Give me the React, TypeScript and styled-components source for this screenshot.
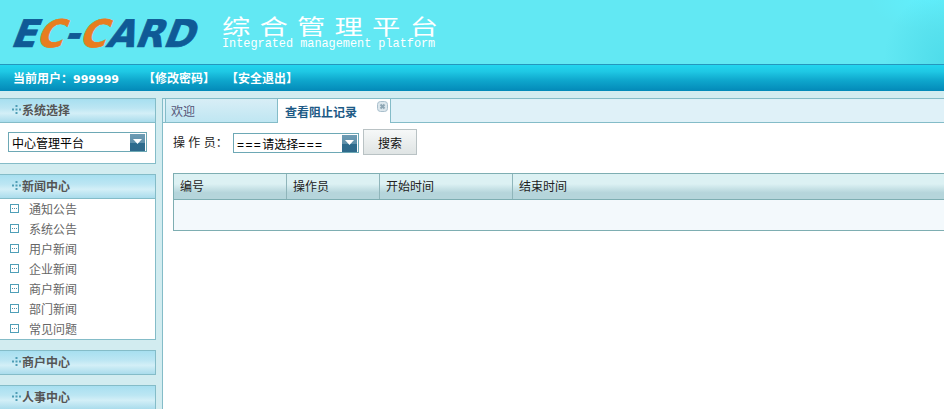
import React from 'react'
import styled, { createGlobalStyle } from 'styled-components'

const GlobalStyle = createGlobalStyle`
  html, body {
    margin: 0;
    padding: 0;
    height: 100%;
    overflow: hidden;
    background: #d2ecf0;
  }
  #root {
    height: 100%;
  }
`

const FONT = `"Liberation Sans", "Noto Sans CJK SC", sans-serif`

const Page = styled.div`
  width: 944px;
  height: 409px;
  overflow: hidden;
  display: flex;
  flex-direction: column;
  font-family: ${FONT};
  font-size: 12px;
  color: #333;
`

const Header = styled.div`
  height: 64px;
  flex: none;
  box-sizing: border-box;
  padding: 13px 0 0 13px;
  display: flex;
  align-items: flex-start;
  background:
    radial-gradient(ellipse 60px 70px at 944px 60px, #4fdcea 0%, rgba(79, 220, 234, 0) 100%),
    radial-gradient(ellipse 60px 30px at 930px 0, #62effc 0%, rgba(98, 239, 252, 0) 100%),
    #62e8f3;
`

const Logo = styled.div`
  width: 215px;
  flex: none;
  margin: 1px 0 0 -6px;
  font-family: "DejaVu Sans", sans-serif;
  font-weight: 700;
  font-size: 38px;
  line-height: 40px;
  white-space: nowrap;
  color: #0f5a96;
  -webkit-text-stroke: 0.7px currentColor;
  transform: skewX(-21deg) scaleX(0.97);
  transform-origin: left bottom;
`

const LogoAccent = styled.span`
  color: #e77d20;
`

const Brand = styled.div`
  color: #fff;
`

const BrandTitle = styled.div`
  font-family: "Noto Sans CJK SC", sans-serif;
  font-size: 21px;
  line-height: 24px;
  letter-spacing: 6.8px;
  white-space: nowrap;
  transform: scaleX(1.35);
  transform-origin: left center;
`

const BrandSub = styled.div`
  font-family: "Liberation Mono", monospace;
  font-size: 11.85px;
  line-height: 13px;
  margin-top: 1px;
  white-space: nowrap;
`

const UserBar = styled.div`
  height: 27px;
  flex: none;
  box-sizing: border-box;
  border-top: 1px solid #2596bd;
  padding: 0 0 2px 13px;
  display: flex;
  align-items: center;
  color: #fff;
  font-weight: 700;
  font-size: 12px;
  background: linear-gradient(#22d5ef 0%, #1fc8e4 25%, #0ea6cc 60%, #0389b8 100%);
`

const UserInfo = styled.span`
  width: 130px;
`

const UserId = styled.span`
  font-family: "DejaVu Sans", sans-serif;
  font-size: 11px;
`

const BarLink = styled.span`
  width: 83px;
`

const Body = styled.div`
  flex: 1;
  display: flex;
  padding-top: 7px;
  min-height: 0;
`

const Sidebar = styled.div`
  width: 156px;
  flex: none;
  display: flex;
  flex-direction: column;
  gap: 10px;
`

const Panel = styled.div`
  box-sizing: border-box;
  border: 1px solid #84bcc8;
  border-left: none;
  background: #fff;
`

const PanelHead = styled.div`
  height: 23px;
  box-sizing: border-box;
  padding: 0 0 2px 12px;
  display: flex;
  align-items: center;
  gap: 1px;
  font-weight: 700;
  color: #555;
  background: linear-gradient(#a7dff0 0%, #bce6f3 40%, #d3eff7 62%, #aadcec 100%);
`

const PanelBody = styled.div`
  border-top: 1px solid #84bcc8;
`

const SelectWrap = styled.div`
  padding: 9px 8px 11px;
`

const SelectBox = styled.div<{ $width: number }>`
  width: ${(p) => p.$width}px;
  height: 20px;
  box-sizing: border-box;
  border: 1px solid #6da8b5;
  background: #fff;
  display: flex;
  align-items: center;
  justify-content: space-between;
  padding: 0 1px 0 3px;
  color: #000;
  font-size: 12px;
`

const SelectText = styled.span`
  white-space: nowrap;
`

const Wide = styled.span`
  letter-spacing: 1.4px;
`

const SelectArrow = styled.span`
  width: 15px;
  height: 17px;
  flex: none;
  background: linear-gradient(#6f9cb4 0%, #5e90aa 50%, #2d6c8e 55%, #2f6a8b 100%);
  display: flex;
  align-items: center;
  justify-content: center;
  padding-bottom: 2px;
  box-sizing: border-box;
`

const NavItem = styled.div`
  height: 20px;
  box-sizing: border-box;
  display: flex;
  align-items: center;
  gap: 10px;
  padding: 0 0 2px 10px;
  color: #666;
`

const Main = styled.div`
  flex: 1;
  min-width: 0;
  margin-left: 6px;
  border-left: 1px solid #84bcc8;
  border-top: 1px solid #84bcc8;
  background: #fff;
  display: flex;
  flex-direction: column;
`

const TabStrip = styled.div`
  height: 24px;
  flex: none;
  box-sizing: border-box;
  padding-left: 2px;
  display: flex;
  border-bottom: 1px solid #84bcc8;
  background: #dff1f8;
`

const Tab = styled.div<{ $active?: boolean }>`
  width: ${(p) => (p.$active ? 114 : 112)}px;
  height: ${(p) => (p.$active ? 24 : 23)}px;
  box-sizing: border-box;
  position: relative;
  padding-left: ${(p) => (p.$active ? 7 : 5)}px;
  display: flex;
  align-items: center;
  border-left: 1px solid #84bcc8;
  border-right: ${(p) => (p.$active ? '1px solid #84bcc8' : 'none')};
  background: ${(p) => (p.$active ? '#fff' : 'linear-gradient(#d8eef6, #bfe6f2)')};
  color: ${(p) => (p.$active ? '#1d5a86' : '#557')};
  font-weight: ${(p) => (p.$active ? 700 : 400)};
`

const TabClose = styled.span`
  position: absolute;
  right: 2px;
  top: 2px;
  width: 11px;
  height: 11px;
  line-height: 0;
`

const Toolbar = styled.div`
  flex: none;
  margin-top: 6px;
  padding-left: 10px;
  display: flex;
  align-items: flex-start;
  color: #222;
`

const FieldLabel = styled.span`
  width: 60px;
  line-height: 28px;
  white-space: pre;
`

const ToolbarSelect = styled.div`
  margin-top: 4px;
`

const SearchButton = styled.button`
  width: 54px;
  height: 26px;
  margin-left: 4px;
  border: 1px solid #b9c2c4;
  background: linear-gradient(#f6f8f8, #dfe4e4);
  font-family: ${FONT};
  font-size: 12px;
  color: #111;
  padding: 0;
`

const Table = styled.div`
  margin: 16px 0 0 10px;
  border: 1px solid #7eaeb2;
  border-right: none;
  height: 58px;
  box-sizing: border-box;
  background: #f3f9fc;
`

const HeadRow = styled.div`
  height: 25px;
  display: flex;
  border-bottom: 1px solid #7eaeb2;
  background: linear-gradient(#dcf1f3 0%, #dcf1f3 40%, #b5d5db 75%, #b5d5db 100%);
`

const HeadCell = styled.div<{ $width?: number }>`
  width: ${(p) => (p.$width ? `${p.$width}px` : 'auto')};
  flex: ${(p) => (p.$width ? 'none' : 1)};
  box-sizing: border-box;
  padding: 0 0 2px 6px;
  display: flex;
  align-items: center;
  border-right: ${(p) => (p.$width ? '1px solid #8fb5ba' : 'none')};
  color: #222;
`

const ArrowIcon = () => (
  <svg width="9" height="5" viewBox="0 0 9 5">
    <path d="M0 0h9L4.5 5z" fill="#fff" />
  </svg>
)

const Dots = () => (
  <svg width="9" height="9" viewBox="0 0 9 9">
    <path d="M3.500 0h2v2h-2zM0 3.500h2v2H0zM3.500 3.500h2v2h-2zM7 3.500h2v2H7zM3.500 7h2v2h-2z" fill="#4f9db5" />
  </svg>
)

const ItemIcon = () => (
  <svg width="9" height="9" viewBox="0 0 9 9">
    <rect x="0.500" y="0.500" width="8" height="8" fill="#fff" stroke="#4f9fb8" />
    <path d="M2 4h1v1H2zM4 4h1v1H4zM6 4h1v1H6z" fill="#4f8fa8" />
  </svg>
)

const CloseIcon = () => (
  <svg width="11" height="11" viewBox="0 0 11 11">
    <rect x="0.500" y="0.500" width="10" height="10" rx="3" fill="#dbe6ec" stroke="#a9bfcc" />
    <path d="M3.500 3.500l4 4M7.500 3.500l-4 4" stroke="#8ea6b4" strokeWidth="2" />
  </svg>
)

const news = ['通知公告', '系统公告', '用户新闻', '企业新闻', '商户新闻', '部门新闻', '常见问题']

const columns = [
  { label: '编号', width: 113 },
  { label: '操作员', width: 93 },
  { label: '开始时间', width: 133 },
  { label: '结束时间' },
]

const App: React.FC = () => {
  return (
    <Page>
      <GlobalStyle />
      <Header>
        <Logo>
          E<LogoAccent>C</LogoAccent>-<LogoAccent>C</LogoAccent>ARD
        </Logo>
        <Brand>
          <BrandTitle>综合管理平台</BrandTitle>
          <BrandSub>Integrated management platform</BrandSub>
        </Brand>
      </Header>
      <UserBar>
        <UserInfo>
          当前用户：<UserId>999999</UserId>
        </UserInfo>
        <BarLink>【修改密码】</BarLink>
        <BarLink>【安全退出】</BarLink>
      </UserBar>
      <Body>
        <Sidebar>
          <Panel>
            <PanelHead>
              <Dots />
              系统选择
            </PanelHead>
            <PanelBody>
              <SelectWrap>
                <SelectBox $width={139}>
                  <SelectText>中心管理平台</SelectText>
                  <SelectArrow>
                    <ArrowIcon />
                  </SelectArrow>
                </SelectBox>
              </SelectWrap>
            </PanelBody>
          </Panel>
          <Panel>
            <PanelHead>
              <Dots />
              新闻中心
            </PanelHead>
            <PanelBody>
              {news.map((item) => (
                <NavItem key={item}>
                  <ItemIcon />
                  {item}
                </NavItem>
              ))}
            </PanelBody>
          </Panel>
          <Panel>
            <PanelHead>
              <Dots />
              商户中心
            </PanelHead>
          </Panel>
          <Panel>
            <PanelHead>
              <Dots />
              人事中心
            </PanelHead>
          </Panel>
        </Sidebar>
        <Main>
          <TabStrip>
            <Tab>欢迎</Tab>
            <Tab $active>
              查看阻止记录
              <TabClose>
                <CloseIcon />
              </TabClose>
            </Tab>
          </TabStrip>
          <Toolbar>
            <FieldLabel>操 作 员：</FieldLabel>
            <ToolbarSelect>
              <SelectBox $width={126}>
                <SelectText>
                  <Wide>===</Wide>请选择<Wide>===</Wide>
                </SelectText>
                <SelectArrow>
                  <ArrowIcon />
                </SelectArrow>
              </SelectBox>
            </ToolbarSelect>
            <SearchButton>搜索</SearchButton>
          </Toolbar>
          <Table>
            <HeadRow>
              {columns.map((c) => (
                <HeadCell key={c.label} $width={c.width}>
                  {c.label}
                </HeadCell>
              ))}
            </HeadRow>
          </Table>
        </Main>
      </Body>
    </Page>
  )
}

export default App
